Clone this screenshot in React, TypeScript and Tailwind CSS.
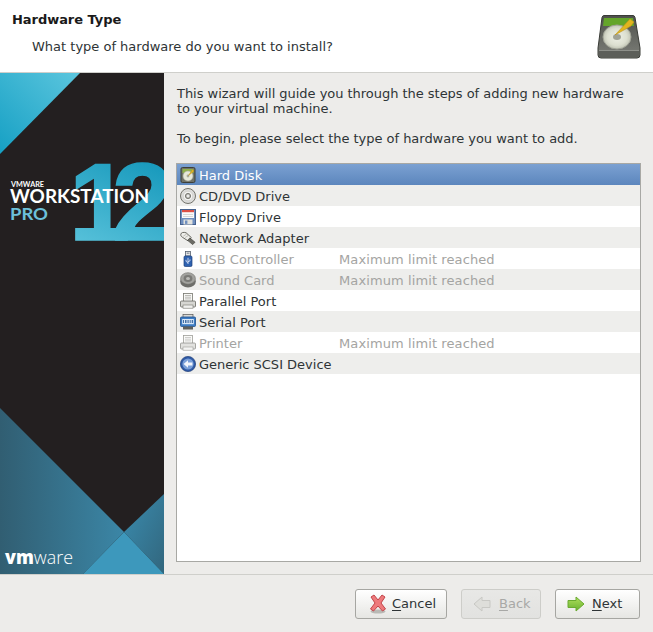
import type { ReactNode } from 'react';

const HardDiskSmall = () => (
  <svg width="16" height="16" viewBox="0 0 16 16">
    <rect x="1" y="0.5" width="14" height="15" rx="1.5" fill="#6f7268" stroke="#3d3f38" />
    <rect x="2.5" y="2" width="11" height="4" fill="#8fb04a" />
    <circle cx="8" cy="9" r="5" fill="#e6e8d8" stroke="#a9ab9c" strokeWidth="0.6" />
    <circle cx="8" cy="9" r="1.4" fill="#a9ab9c" />
    <path d="M8.5 8.5 L12.5 2.5 L14 4 Z" fill="#e8b92c" stroke="#b98e16" strokeWidth="0.5" />
  </svg>
);

const CdIcon = () => (
  <svg width="16" height="16" viewBox="0 0 16 16">
    <circle cx="8" cy="8" r="7.5" fill="#dcdcda" stroke="#66665f" strokeWidth="0.9" />
    <circle cx="8" cy="8" r="4.8" fill="#f3f3f1" stroke="#c4c4bf" strokeWidth="0.6" />
    <circle cx="8" cy="8" r="2.6" fill="#c0c0bc" stroke="#5f5f58" strokeWidth="0.8" />
    <circle cx="8" cy="8" r="1" fill="#fafafa" />
  </svg>
);

const FloppyIcon = () => (
  <svg width="16" height="16" viewBox="0 0 16 16">
    <rect x="0.5" y="0.5" width="15" height="15" fill="#6f8fbf" stroke="#46628f" />
    <rect x="2" y="1" width="12" height="8" fill="#fafafa" />
    <rect x="2" y="1" width="12" height="2.2" fill="#dc4f45" />
    <rect x="3" y="5" width="10" height="0.8" fill="#cfcfcf" />
    <rect x="3" y="7" width="10" height="0.8" fill="#cfcfcf" />
    <rect x="3.5" y="10.5" width="9" height="5" fill="#e2e2de" />
    <rect x="5" y="11.5" width="2.4" height="3.4" fill="#6f8fbf" />
  </svg>
);

const NetworkIcon = () => (
  <svg width="17" height="16" viewBox="0 0 17 16">
    <path d="M0.8 4.5 C0.8 2 4 1.5 6.5 2.5 L12 7.5 L8.5 11 L3 7.5 C1.8 6.6 0.8 6 0.8 4.5 Z" fill="#eeeeea" stroke="#5f5f58" strokeWidth="1" />
    <path d="M10.5 8 L16 12.5 L13.5 15 L8 10.5 Z" fill="#6c6c65" stroke="#3e3e39" strokeWidth="0.7" />
    <path d="M3.5 6 L7 3.8 M5.5 7.5 L9 5.2" stroke="#aeaea7" strokeWidth="0.8" />
  </svg>
);

const UsbIcon = () => (
  <svg width="16" height="16" viewBox="0 0 16 16">
    <rect x="5.5" y="0.5" width="5" height="4.5" fill="#e8e8e8" stroke="#55606f" strokeWidth="0.8" />
    <rect x="6.8" y="1.6" width="0.9" height="1.2" fill="#55606f" />
    <rect x="8.4" y="1.6" width="0.9" height="1.2" fill="#55606f" />
    <rect x="4" y="5" width="8" height="10.5" rx="1.2" fill="#2f62b0" stroke="#1d3f78" strokeWidth="0.7" />
    <path d="M8 6.8 V13 M6 8.8 V10.4 L8 11.6 M10 8.4 V9.8 L8 10.8" stroke="#e8eefa" strokeWidth="0.8" fill="none" />
  </svg>
);

const SoundIcon = () => (
  <svg width="16" height="16" viewBox="0 0 16 16">
    <ellipse cx="8" cy="9.5" rx="7.8" ry="6" fill="#6e6e6a" />
    <ellipse cx="8" cy="6.5" rx="7.4" ry="5.8" fill="#a2a29e" stroke="#6e6e6a" strokeWidth="0.6" />
    <ellipse cx="8" cy="6.5" rx="4.4" ry="3.4" fill="#7a7a76" />
    <ellipse cx="8" cy="6.5" rx="2" ry="1.5" fill="#bcbcb8" />
  </svg>
);

const PrinterIcon = ({ dim }: { dim?: boolean }) => (
  <svg width="16" height="16" viewBox="0 0 16 16" opacity={dim ? 0.7 : 1}>
    <rect x="3.5" y="0.5" width="9" height="8" fill="#f8f8f6" stroke="#77776f" strokeWidth="0.8" />
    <path d="M5 2.5 H11 M5 4.2 H11 M5 5.9 H11" stroke="#a2a29c" strokeWidth="0.7" />
    <rect x="0.5" y="8" width="15" height="6" rx="1" fill="#d6d6d2" stroke="#66665f" strokeWidth="0.8" />
    <rect x="3" y="12" width="10" height="3.2" fill="#f0f0ee" stroke="#77776f" strokeWidth="0.6" />
  </svg>
);

const SerialIcon = () => (
  <svg width="16" height="16" viewBox="0 0 16 16">
    <rect x="3" y="0.5" width="10" height="4" fill="#d8d8d4" stroke="#555" strokeWidth="0.7" />
    <rect x="0.5" y="3" width="15" height="9.5" rx="1" fill="#3d7cc4" stroke="#1f4f8c" strokeWidth="0.8" />
    <rect x="2.2" y="5" width="11.6" height="5.2" fill="#d9e8f8" />
    <path d="M3.5 6 V9 M5.5 6 V9 M7 6 V9 M8.8 6 V9 M10.8 6 V9 M12.5 6 V9" stroke="#1f4f8c" strokeWidth="0.8" />
    <rect x="3" y="12.5" width="10" height="3" fill="#5f5f5b" />
  </svg>
);

const ScsiIcon = () => (
  <svg width="16" height="16" viewBox="0 0 16 16">
    <circle cx="8" cy="8" r="7.6" fill="#2f5aa6" stroke="#213f78" strokeWidth="0.7" />
    <circle cx="8" cy="8" r="5.6" fill="#7a9fd8" />
    <path d="M3.6 8 L8 4.2 V6.6 H12.4 V9.4 H8 V11.8 Z" fill="#f3f6fc" />
  </svg>
);

const HeaderDisk = () => (
  <svg width="44" height="44" viewBox="0 0 44 44">
    <defs>
      <linearGradient id="hdBody" x1="0" y1="0" x2="0" y2="1">
        <stop offset="0" stopColor="#4e504b" />
        <stop offset="1" stopColor="#7c7e78" />
      </linearGradient>
      <radialGradient id="hdDisc" cx="0.5" cy="0.5" r="0.5">
        <stop offset="0" stopColor="#eef0e6" />
        <stop offset="0.7" stopColor="#dcdfd0" />
        <stop offset="1" stopColor="#c2c5b6" />
      </radialGradient>
    </defs>
    <path d="M7 0.5 H36 Q37.5 0.5 38 2.5 L43 33 V40 Q43 43 40 43 H4 Q1 43 1 40 V33 L5 2.5 Q5.5 0.5 7 0.5 Z" fill="url(#hdBody)" stroke="#3a3c37" />
    <path d="M7 3 H36 L37 11 H6 Z" fill="#64a52a" />
    <rect x="2" y="35" width="40" height="7" rx="1" fill="#5c5e59" />
    <rect x="2" y="35" width="40" height="1" fill="#8e908a" />
    <ellipse cx="20" cy="22" rx="14" ry="12" fill="url(#hdDisc)" stroke="#9fa295" />
    <ellipse cx="20" cy="22" rx="4" ry="3" fill="#a0a296" />
    <path d="M18 20 L33 4 L37 7 L34 11 Z" fill="#e2b51f" stroke="#c0941a" strokeWidth="0.6" />
  </svg>
);

const CancelIcon = () => (
  <svg width="18" height="20" viewBox="0 0 18 20">
    <ellipse cx="9" cy="17.5" rx="7.5" ry="2" fill="#b9b9b5" />
    <path d="M2 3 L5 1 L9 6 L13 1 L16 3 L12 9 L16.5 15 L13.5 17 L9 12 L4.5 17 L1.5 15 L6 9 Z" fill="#ee7a7c" stroke="#c2454a" strokeLinejoin="round" />
  </svg>
);

const BackIcon = () => (
  <svg width="18" height="16" viewBox="0 0 18 16">
    <path d="M1 8 L9 1 V4.5 H17 V11.5 H9 V15 Z" fill="#dededa" stroke="#c8c8c4" strokeLinejoin="round" />
  </svg>
);

const NextIcon = () => (
  <svg width="18" height="16" viewBox="0 0 18 16">
    <defs>
      <linearGradient id="nextFill" x1="0" y1="0" x2="0" y2="1">
        <stop offset="0" stopColor="#b0e05c" />
        <stop offset="1" stopColor="#68b030" />
      </linearGradient>
    </defs>
    <path d="M17 8 L9 1 V4.5 H1 V11.5 H9 V15 Z" fill="url(#nextFill)" stroke="#6aaa30" strokeLinejoin="round" />
  </svg>
);

const Sidebar = () => (
  <svg width="164" height="501" viewBox="0 0 164 501" className="block shrink-0">
    <defs>
      <linearGradient id="topCorner" x1="0" y1="1" x2="1" y2="0">
        <stop offset="0" stopColor="#16a0c4" />
        <stop offset="1" stopColor="#5cc6de" />
      </linearGradient>
      <linearGradient id="twelve" x1="0.7" y1="0" x2="0.3" y2="1">
        <stop offset="0" stopColor="#0f94b8" />
        <stop offset="1" stopColor="#5cc4dc" />
      </linearGradient>
      <linearGradient id="bottomLeft" x1="0" y1="0" x2="1" y2="0">
        <stop offset="0" stopColor="#315e72" />
        <stop offset="1" stopColor="#3b86a6" />
      </linearGradient>
      <linearGradient id="bottomRight" x1="0" y1="0" x2="1" y2="1">
        <stop offset="0" stopColor="#3a8caf" />
        <stop offset="1" stopColor="#32667d" />
      </linearGradient>
    </defs>
    <rect width="164" height="501" fill="#231f20" />
    <path d="M0 0 H80 L0 81 Z" fill="url(#topCorner)" />
    <path d="M0 335 L124 459 L83 501 H0 Z" fill="url(#bottomLeft)" />
    <path d="M164 421 V501 L124 459 Z" fill="url(#bottomRight)" />
    <path d="M124 459 L83 501 H164 Z" fill="#3d98bc" />
    <text x="69 112" y="167" fontFamily="'Liberation Sans', sans-serif" fontWeight="700" fontSize="110" fill="url(#twelve)" stroke="url(#twelve)" strokeWidth="1.5">12</text>
    <text x="11" y="114" fontFamily="Lato, sans-serif" fontWeight="700" fontSize="7.5" fill="#ffffff" textLength="33" lengthAdjust="spacingAndGlyphs">VMWARE</text>
    <text x="10" y="130" fontFamily="Lato, sans-serif" fontWeight="700" fontSize="18" fill="#ffffff" textLength="139" lengthAdjust="spacingAndGlyphs">WORKSTATION</text>
    <text x="10" y="147" fontFamily="Lato, sans-serif" fontWeight="700" fontSize="17.5" fill="#6cc0da" textLength="38" lengthAdjust="spacingAndGlyphs">PRO</text>
    <text x="5" y="491" fontFamily="'Open Sans', sans-serif" fontWeight="300" fontSize="19" fill="#ffffff" textLength="68" lengthAdjust="spacingAndGlyphs">
      <tspan fontWeight="800">vm</tspan>ware
    </text>
  </svg>
);

type Row = { label: string; icon: ReactNode; disabled?: boolean };

const rows: Row[] = [
  { label: 'Hard Disk', icon: <HardDiskSmall /> },
  { label: 'CD/DVD Drive', icon: <CdIcon /> },
  { label: 'Floppy Drive', icon: <FloppyIcon /> },
  { label: 'Network Adapter', icon: <NetworkIcon /> },
  { label: 'USB Controller', icon: <UsbIcon />, disabled: true },
  { label: 'Sound Card', icon: <SoundIcon />, disabled: true },
  { label: 'Parallel Port', icon: <PrinterIcon /> },
  { label: 'Serial Port', icon: <SerialIcon /> },
  { label: 'Printer', icon: <PrinterIcon dim />, disabled: true },
  { label: 'Generic SCSI Device', icon: <ScsiIcon /> },
];

const WizardButton = ({ icon, first, rest, className, disabled }: { icon: ReactNode; first: string; rest: string; className: string; disabled?: boolean }) => (
  <button
    className={`h-[30px] flex items-center rounded-[3px] border bg-gradient-to-b ${className} ${
      disabled
        ? 'border-[#cdcdc9] from-[#e8e8e6] to-[#e2e2e0] text-[#a8a8a6]'
        : 'border-[#a6a6a2] from-[#ffffff] to-[#e6e6e3] text-[#2e3436]'
    }`}
  >
    {icon}
    <span className="leading-[16px]">
      <span className="underline underline-offset-2">{first}</span>
      {rest}
    </span>
  </button>
);

export default function App() {
  return (
    <div className="w-[653px] h-[632px] flex flex-col overflow-hidden bg-[#edecea] text-[13px] text-[#2e3436] font-['DejaVu_Sans',sans-serif]">
      {/* Header */}
      <header className="h-[73px] shrink-0 flex items-start justify-between bg-white border-b border-[#cfcfcb] pl-3 pr-[12px]">
        <div>
          <p className="mt-[12px] leading-[16px] font-bold text-[#1a1a1a] tracking-[-0.05px]">Hardware Type</p>
          <p className="mt-[11px] ml-5 leading-[16px]">What type of hardware do you want to install?</p>
        </div>
        <div className="mt-[15px]">
          <HeaderDisk />
        </div>
      </header>

      {/* Body */}
      <div className="h-[501px] shrink-0 flex">
        <Sidebar />
        <div className="flex-1 flex flex-col pl-3 pr-3">
          <p className="mt-[13px] pl-px leading-[15px] tracking-[-0.03px]">
            This wizard will guide you through the steps of adding new hardware
            <br />
            to your virtual machine.
          </p>
          <p className="mt-[15px] pl-px leading-[15px] tracking-[-0.03px]">To begin, please select the type of hardware you want to add.</p>
          <div className="mt-[17px] h-[399px] bg-white border border-[#a8a8a4]">
            {rows.map((row, i) => {
              const selected = i === 0;
              const striped = i % 2 === 1;
              return (
                <div
                  key={row.label}
                  className={`h-[21px] flex items-center pl-[3px] ${
                    selected
                      ? 'bg-gradient-to-b from-[#7ba1d2] to-[#5c86bd] text-white'
                      : striped
                        ? 'bg-[#eeeeec]'
                        : 'bg-white'
                  } ${row.disabled ? 'text-[#a4a4a2]' : ''}`}
                >
                  <span className="w-4 h-4 shrink-0 flex">{row.icon}</span>
                  <span className="ml-[3px] w-[140px] shrink-0 pt-[2px] leading-[16px]">{row.label}</span>
                  {row.disabled && <span className="pt-[2px] leading-[16px] tracking-[0.1px]">Maximum limit reached</span>}
                </div>
              );
            })}
          </div>
        </div>
      </div>

      {/* Footer */}
      <footer className="flex-1 flex items-start justify-end gap-[14px] border-t border-[#cfcfcb] pt-[14px] pr-[13px]">
        <WizardButton icon={<CancelIcon />} first="C" rest="ancel" className="w-[92px] pl-[13px] gap-[5px]" />
        <WizardButton icon={<BackIcon />} first="B" rest="ack" className="w-[80px] pl-[11px] gap-[8px]" disabled />
        <WizardButton icon={<NextIcon />} first="N" rest="ext" className="w-[85px] pl-[11px] gap-[7px]" />
      </footer>
    </div>
  );
}
